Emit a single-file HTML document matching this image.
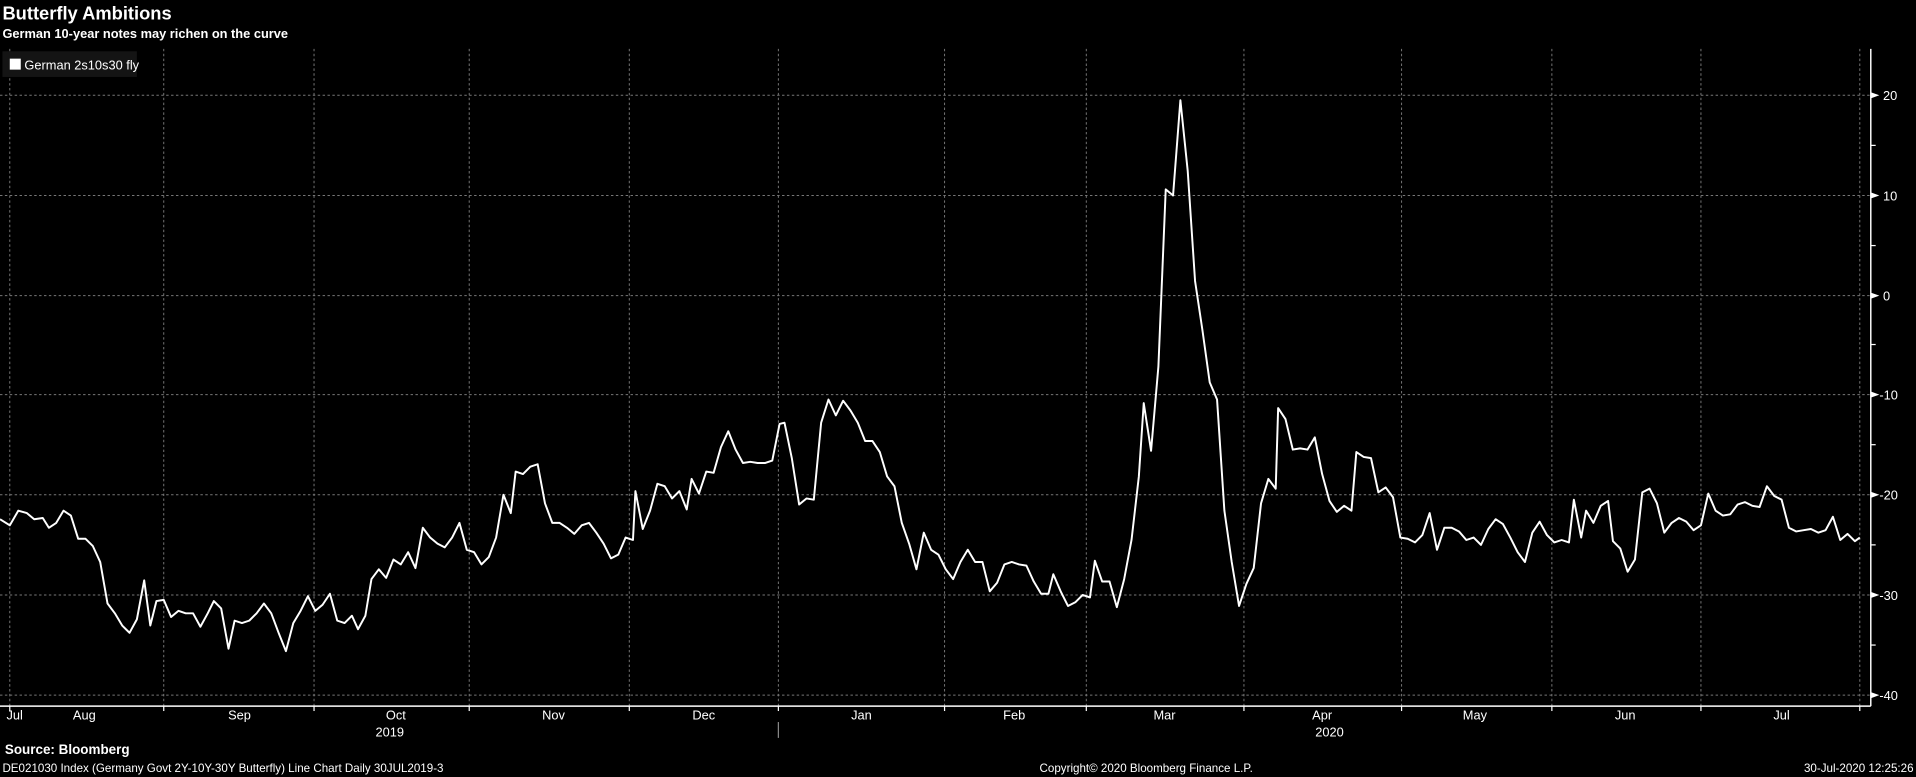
<!DOCTYPE html>
<html><head><meta charset="utf-8"><style>
html,body{margin:0;padding:0;background:#000;width:1916px;height:777px;overflow:hidden}
svg{display:block}
text{font-family:"Liberation Sans",sans-serif;fill:#fff}
</style></head><body>
<svg width="1916" height="777" viewBox="0 0 1568 636" preserveAspectRatio="none">
<rect width="1568" height="636" fill="#000"/>
<text x="2" y="16" font-size="15" font-weight="bold">Butterfly Ambitions</text>
<text x="2" y="31" font-size="10.5" font-weight="bold">German 10-year notes may richen on the curve</text>
<g stroke="#777" stroke-width="0.8" stroke-dasharray="2,2">
<line x1="0" y1="78" x2="1531" y2="78"/><line x1="0" y1="160" x2="1531" y2="160"/><line x1="0" y1="242" x2="1531" y2="242"/><line x1="0" y1="323" x2="1531" y2="323"/><line x1="0" y1="405" x2="1531" y2="405"/><line x1="0" y1="487" x2="1531" y2="487"/><line x1="0" y1="569" x2="1531" y2="569"/>
<line x1="8" y1="40" x2="8" y2="578"/><line x1="134" y1="40" x2="134" y2="578"/><line x1="257" y1="40" x2="257" y2="578"/><line x1="384" y1="40" x2="384" y2="578"/><line x1="515" y1="40" x2="515" y2="578"/><line x1="637" y1="40" x2="637" y2="578"/><line x1="773" y1="40" x2="773" y2="578"/><line x1="889" y1="40" x2="889" y2="578"/><line x1="1018" y1="40" x2="1018" y2="578"/><line x1="1147" y1="40" x2="1147" y2="578"/><line x1="1270" y1="40" x2="1270" y2="578"/><line x1="1392" y1="40" x2="1392" y2="578"/><line x1="1522" y1="40" x2="1522" y2="578"/>
</g>
<rect x="2" y="42" width="110" height="21" fill="#141414"/>
<rect x="8" y="48" width="9" height="9" fill="#fff"/>
<text x="20" y="57" font-size="10.5">German 2s10s30 fly</text>
<g stroke="#fff" stroke-width="1.2" fill="none">
<line x1="1531" y1="40" x2="1531" y2="578"/><line x1="0" y1="578" x2="1531" y2="578"/>
<g stroke-width="1">
<line x1="8" y1="578" x2="8" y2="582"/><line x1="134" y1="578" x2="134" y2="582"/><line x1="257" y1="578" x2="257" y2="582"/><line x1="384" y1="578" x2="384" y2="582"/><line x1="515" y1="578" x2="515" y2="582"/><line x1="637" y1="578" x2="637" y2="582"/><line x1="773" y1="578" x2="773" y2="582"/><line x1="889" y1="578" x2="889" y2="582"/><line x1="1018" y1="578" x2="1018" y2="582"/><line x1="1147" y1="578" x2="1147" y2="582"/><line x1="1270" y1="578" x2="1270" y2="582"/><line x1="1392" y1="578" x2="1392" y2="582"/><line x1="1522" y1="578" x2="1522" y2="582"/>
<line x1="1531" y1="119" x2="1535" y2="119"/><line x1="1531" y1="201" x2="1535" y2="201"/><line x1="1531" y1="282" x2="1535" y2="282"/><line x1="1531" y1="364" x2="1535" y2="364"/><line x1="1531" y1="446" x2="1535" y2="446"/><line x1="1531" y1="528" x2="1535" y2="528"/>
<line x1="637" y1="591" x2="637" y2="604" stroke="#888"/>
</g>
</g>
<g fill="#fff">
<path d="M1531 75.5L1538 78L1531 80.5Z"/><path d="M1531 157.5L1538 160L1531 162.5Z"/><path d="M1531 239.5L1538 242L1531 244.5Z"/><path d="M1531 320.5L1538 323L1531 325.5Z"/><path d="M1531 402.5L1538 405L1531 407.5Z"/><path d="M1531 484.5L1538 487L1531 489.5Z"/><path d="M1531 566.5L1538 569L1531 571.5Z"/>
</g>
<g font-size="10.5">
<text x="1541" y="82">20</text><text x="1541" y="164">10</text><text x="1541" y="246">0</text><text x="1538" y="327">-10</text><text x="1538" y="409">-20</text><text x="1538" y="491">-30</text><text x="1538" y="573">-40</text>
</g>
<g font-size="10.5" text-anchor="middle">
<text x="12" y="589">Jul</text><text x="69" y="589">Aug</text><text x="196" y="589">Sep</text><text x="324" y="589">Oct</text><text x="453" y="589">Nov</text><text x="576" y="589">Dec</text><text x="705" y="589">Jan</text><text x="830" y="589">Feb</text><text x="953" y="589">Mar</text><text x="1082" y="589">Apr</text><text x="1207" y="589">May</text><text x="1330" y="589">Jun</text><text x="1458" y="589">Jul</text>
<text x="319" y="603">2019</text><text x="1088" y="603">2020</text>
</g>
<polyline fill="none" stroke="#fff" stroke-width="1.6" stroke-linejoin="round" points="0,425 8,430 15,418 22,420 28,425 35,424 40,432 46,428 52,418 58,422 64,441 70,441 76,447 82,460 88,494 94,502 100,512 106,518 112,507 118,475 123,512 128,492 134,491 140,505 146,500 152,502 158,502 164,513 170,502 175,492 181,498 187,531 192,508 198,510 204,508 210,502 216,494 222,502 228,518 234,533 240,510 246,500 252,488 258,500 264,495 270,486 276,508 282,510 288,504 293,515 299,504 304,474 310,466 316,473 322,458 328,462 334,452 340,465 346,432 352,440 358,445 364,448 370,440 376,428 382,450 388,452 394,462 400,456 406,440 412,405 418,420 422,386 428,388 434,382 440,380 446,412 452,428 458,428 464,432 470,437 476,430 482,428 488,436 494,445 500,457 506,454 512,440 518,442 520,402 526,433 532,418 538,396 544,398 550,408 556,402 562,417 566,392 572,404 578,386 584,387 590,366 596,353 602,368 608,379 614,378 620,379 626,379 632,377 638,347 642,346 648,375 654,413 660,408 666,409 672,346 678,327 684,340 690,328 696,336 702,346 708,361 714,361 720,370 726,390 732,398 738,428 744,445 750,466 756,436 762,450 768,454 774,466 780,474 786,460 792,450 798,460 804,460 810,484 816,477 822,462 828,460 834,462 840,463 846,476 852,486 858,486 862,470 868,484 874,496 880,493 886,487 892,489 896,459 902,476 908,476 914,497 920,474 926,442 932,390 936,330 942,369 948,300 954,155 960,160 966,82 972,140 978,230 984,270 990,313 996,327 1002,418 1008,460 1014,496 1020,478 1026,465 1032,412 1038,392 1044,400 1046,334 1052,343 1058,368 1064,367 1070,368 1076,358 1082,388 1088,410 1094,419 1100,414 1106,418 1110,370 1116,374 1122,375 1128,403 1134,399 1140,407 1146,440 1152,441 1158,444 1164,438 1170,420 1176,450 1182,432 1188,432 1194,435 1200,442 1206,440 1212,446 1218,433 1224,425 1230,429 1236,440 1242,452 1248,460 1254,436 1260,427 1266,438 1272,444 1278,442 1284,444 1288,409 1294,440 1298,418 1304,428 1310,414 1316,410 1320,443 1326,449 1332,468 1338,458 1344,403 1350,400 1356,412 1362,436 1368,428 1374,424 1380,427 1386,434 1392,430 1398,404 1404,418 1410,422 1416,421 1422,413 1428,411 1434,414 1440,415 1446,398 1452,406 1458,409 1464,432 1470,435 1476,434 1482,433 1488,436 1494,434 1500,423 1506,442 1512,437 1518,443 1522,440"/>
<text x="4" y="617" font-size="11" font-weight="bold">Source: Bloomberg</text>
<text x="2" y="632" font-size="9.5">DE021030 Index (Germany Govt 2Y-10Y-30Y Butterfly) Line Chart  Daily 30JUL2019-3</text>
<text x="938" y="632" font-size="9.5" text-anchor="middle">Copyright© 2020 Bloomberg Finance L.P.</text>
<text x="1566" y="632" font-size="9.5" text-anchor="end">30-Jul-2020 12:25:26</text>
</svg>
</body></html>
